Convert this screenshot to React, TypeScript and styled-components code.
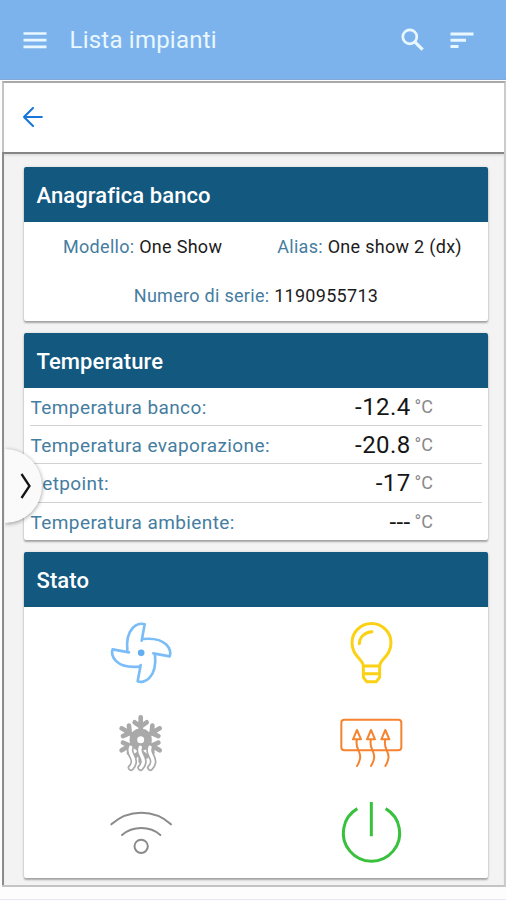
import React from "react";
import styled, { createGlobalStyle } from "styled-components";

const Global = createGlobalStyle`
  * { box-sizing: border-box; }
  body { margin: 0; background: #fff; font-family: Roboto, "Liberation Sans", sans-serif; overflow: hidden; }
  svg { display: block; fill: none; stroke-linecap: round; stroke-linejoin: round; }
`;

const Screen = styled.div`
  width: 506px;
  height: 900px;
  display: flex;
  flex-direction: column;
  background: #fdfdfe;
  border-bottom: 1px solid #e6e7f3;
`;

const AppBar = styled.header`
  height: 80px;
  flex: none;
  display: flex;
  align-items: center;
  padding: 0 30px 0 21px;
  background: #7db3ec;
  border-bottom: 1px solid #84a9d6;
  color: #e9f7ff;
`;

const AppTitle = styled.h1`
  flex: 1;
  margin: 1px 0 0 20.5px;
  font-size: 24px;
  line-height: 30px;
  font-weight: 400;
  letter-spacing: 0.22px;
`;

const BarActions = styled.div`
  display: flex;
  gap: 21px;
`;

const Frame = styled.div`
  position: relative;
  height: 806px;
  flex: none;
  margin: 1px 0 0 2px;
  display: flex;
  flex-direction: column;
  border-style: solid;
  border-width: 2px;
  border-color: #a9a9a7 #cbcbcb #c4c4c4 #c4c4c4;
`;

const BackBar = styled.div`
  height: 69px;
  flex: none;
  display: flex;
  align-items: center;
  padding: 0 0 1px 17px;
  background: #fff;
`;

const Content = styled.main`
  flex: 1;
  display: flex;
  flex-direction: column;
  gap: 12px;
  margin-left: -2px;
  padding: 13px 14px 0 20px;
  background: #f3f3f3;
  border-top: 2px solid #858585;
  border-left: 2px solid #8c8c8c;
  box-shadow: inset 0 2px 2px #e0e0e0;
`;

const Card = styled.section<{ $height: number }>`
  height: ${(p) => p.$height}px;
  width: 464px;
  flex: none;
  display: flex;
  flex-direction: column;
  background: #fff;
  border-radius: 2px;
  box-shadow: 0 2px 2px rgba(0, 0, 0, 0.3), 0 0 3px rgba(0, 0, 0, 0.12);
`;

const CardTitle = styled.h2`
  height: 55px;
  flex: none;
  margin: 0;
  padding: 1px 12.5px 0;
  font-size: 22px;
  line-height: 55px;
  font-weight: 500;
  letter-spacing: 0.08px;
  color: #fff;
  background: #12587f;
  border-radius: 2px 2px 0 0;
`;

const InfoRow = styled.div<{ $gap?: number; $shift?: number }>`
  height: 49px;
  display: flex;
  justify-content: center;
  align-items: center;
  gap: ${(p) => p.$gap ?? 0}px;
  padding-left: ${(p) => p.$shift ?? 0}px;
`;

const Field = styled.span`
  font-size: 18px;
  line-height: 24px;
  color: #1c1c1c;
  white-space: nowrap;
  letter-spacing: 0.29px;
`;

const Label = styled.span`
  color: #457d9f;
`;

const Readings = styled.div`
  display: flex;
  flex-direction: column;
  padding: 0 6px;
`;

const Reading = styled.div`
  height: 38.2px;
  display: flex;
  align-items: center;
  font-size: 19px;
  letter-spacing: 0.4px;
  padding: 1px 49px 0 0.5px;
  border-bottom: 1px solid #d2d2d2;
  &:last-child { border-bottom: 0; }
`;

const Value = styled.span`
  flex: 1;
  text-align: right;
  font-size: 24px;
  line-height: 30px;
  color: #161616;
`;

const Unit = styled.span`
  margin: -2px 0 0 4px;
  font-size: 18px;
  letter-spacing: 0;
  color: #8a8a8a;
`;

const StatusGrid = styled.div`
  display: grid;
  grid-template-columns: 230px 230px;
  grid-template-rows: 90px 90px 88px;
  place-items: center;
  padding: 1px 2px 0;
`;

const Drawer = styled.button`
  position: absolute;
  left: 1px;
  top: 366px;
  width: 37px;
  height: 74px;
  padding: 0 0 0 13px;
  border: 0;
  border-radius: 0 37px 37px 0;
  background: #fafafa;
  clip-path: inset(-6px -6px -6px 0);
  box-shadow: 0 1px 4px rgba(0, 0, 0, 0.4);
`;

const readings = [
  { label: "Temperatura banco:", value: "-12.4" },
  { label: "Temperatura evaporazione:", value: "-20.8" },
  { label: "Setpoint:", value: "-17" },
  { label: "Temperatura ambiente:", value: "---" },
];

const StatusIcon = ({ color, width, top = 21, children }: { color: string; width: number; top?: number; children: React.ReactNode }) => (
  <svg width="72" height="72" viewBox={`15 ${top} 216 216`} stroke={color} strokeWidth={width}>
    {children}
  </svg>
);

const BLADE = "M125 92 L134 43 C116 35 75 52 82 123";
const FLAKE_ARM = "M122 90 V52 M104 67 L122 80 L140 67";

export default function App() {
  return (
    <Screen>
      <Global />
      <AppBar>
        <svg width="28" height="28" viewBox="0 0 28 28" stroke="currentColor" strokeWidth="2.7">
          <path strokeLinecap="butt" d="M2.5 7.5h23M2.5 14.2h23M2.5 20.9h23" />
        </svg>
        <AppTitle>Lista impianti</AppTitle>
        <BarActions>
          <svg width="28" height="28" viewBox="0 0 28 28" stroke="currentColor" strokeWidth="2.7">
            <circle cx="10.8" cy="10.8" r="7" />
            <path strokeLinecap="butt" d="M15.8 15.800 L23.600 23.600" strokeWidth="3.2" />
          </svg>
          <svg width="28" height="28" viewBox="0 0 28 28" stroke="currentColor" strokeWidth="3">
            <path strokeLinecap="butt" d="M2.5 8h23M2.5 14.2h15.5M2.5 20.5h8" />
          </svg>
        </BarActions>
      </AppBar>
      <Frame>
        <BackBar>
          <svg width="24" height="24" viewBox="0 0 24 24" stroke="#1976d9" strokeWidth="2.1">
            <path d="M20.800 12H3M12 3L3 12l9 9" />
          </svg>
        </BackBar>
        <Content>
          <Card $height={154}>
            <CardTitle>Anagrafica banco</CardTitle>
            <InfoRow $gap={55} $shift={13}>
              <Field><Label>Modello:</Label> One Show</Field>
              <Field><Label>Alias:</Label> One show 2 (dx)</Field>
            </InfoRow>
            <InfoRow>
              <Field><Label>Numero di serie:</Label> 1190955713</Field>
            </InfoRow>
          </Card>
          <Card $height={207}>
            <CardTitle>Temperature</CardTitle>
            <Readings>
              {readings.map((r) => (
                <Reading key={r.label}>
                  <Label>{r.label}</Label>
                  <Value>{r.value}</Value>
                  <Unit>°C</Unit>
                </Reading>
              ))}
            </Readings>
          </Card>
          <Card $height={326}>
            <CardTitle>Stato</CardTitle>
            <StatusGrid>
              <StatusIcon color="#7abdf7" width={8}>
                {[0, 90, 180, 270].map((a) => (
                  <path key={a} d={BLADE} transform={`rotate(${a} 123.5 128.5)`} />
                ))}
                <circle cx="123.5" cy="128.5" r="10" fill="#62aef0" stroke="none" />
              </StatusIcon>
              <StatusIcon color="#fbd116" width={9}>
                <path d="M100 168 C99 148 66 138 66 98 A58 57 0 0 1 183 98 C183 138 150 148 149 168 Z" />
                <path d="M88 101 C89 80 106 66 126 65" />
                <path d="M100 168 V202 L110 215 H139 L149 202 V168 M100 191 H149" />
              </StatusIcon>
              <StatusIcon color="#a9a9a9" width={14}>
                {[0, 60, 120, 180, 240, 300].map((a) => (
                  <path key={a} d={FLAKE_ARM} strokeWidth="14" transform={`rotate(${a} 122 118)`} />
                ))}
                <circle cx="122" cy="119" r="22" strokeWidth="23" />
                {[93, 122, 151].map((x) => {
                  const wave = `M${x - 1} 142 C${x - 9} 163 ${x + 12} 170 ${x + 8} 188 Q${x + 6} 198 ${x} 203`;
                  return (
                    <g key={x}>
                      <path d={wave} strokeWidth="20" />
                      <path d={wave} stroke="#fff" strokeWidth="10" />
                    </g>
                  );
                })}
              </StatusIcon>
              <StatusIcon color="#f5832f" width={6}>
                <rect x="34" y="59" width="180" height="92" rx="9" />
                {[81, 123, 166].map((x) => (
                  <path key={x} d={`M${x} 90 L${x - 12} 118 H${x + 12} Z M${x} 118 C${x - 8} 145 ${x + 14} 155 ${x + 9} 176 Q${x + 7} 187 ${x} 198`} />
                ))}
              </StatusIcon>
              <StatusIcon color="#8b8b8b" width={6} top={18}>
                <path d="M34 103 Q72 68 124 68 T213 103 M66 135 Q90 114 124 114 T181 135" />
                <circle cx="123.5" cy="169" r="20" />
              </StatusIcon>
              <StatusIcon color="#38c13c" width={9} top={18}>
                <path strokeLinecap="butt" d="M124 36 V139 M82 56 A84.5 84.5 0 1 0 167 56" />
              </StatusIcon>
            </StatusGrid>
          </Card>
        </Content>
        <Drawer aria-label="Apri menu">
          <svg width="16" height="30" viewBox="0 0 16 30" stroke="#151515" strokeWidth="2.3">
            <path strokeLinecap="butt" strokeLinejoin="miter" d="M3.5 3 L11.5 15 L3.5 27" />
          </svg>
        </Drawer>
      </Frame>
    </Screen>
  );
}
